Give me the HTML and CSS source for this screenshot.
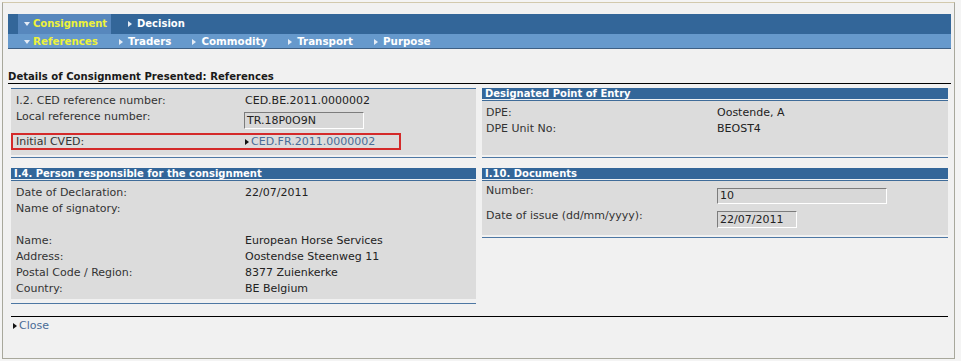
FILE: index.html
```html
<!DOCTYPE html>
<html lang="en">
<head>
    <meta charset="UTF-8">
    <title>CED • Details of Consignment Presented</title>
    <link rel="stylesheet" href="styles.css">
</head>
<body>
    <div class="window">
        <!-- Tabs -->
        <div class="tabs">
            <ul class="tabs-main">
                <li class="tab is-open"><span class="arrow-down"></span>Consignment</li>
                <li class="tab"><span class="arrow-right"></span>Decision</li>
            </ul>
            <ul class="tabs-sub">
                <li class="tab is-open"><span class="arrow-down"></span>References</li>
                <li class="tab"><span class="arrow-right"></span>Traders</li>
                <li class="tab"><span class="arrow-right"></span>Commodity</li>
                <li class="tab"><span class="arrow-right"></span>Transport</li>
                <li class="tab"><span class="arrow-right"></span>Purpose</li>
            </ul>
        </div>

        <h1 class="page-title">Details of Consignment Presented: References</h1>

        <div class="columns">
            <!-- Left column -->
            <div class="column left">
                <div class="panel no-head">
                    <div class="panel-body refs">
                        <div class="field">
                            <span class="label">I.2. CED reference number:</span>
                            <span class="value">CED.BE.2011.0000002</span>
                        </div>
                        <div class="field">
                            <span class="label">Local reference number:</span>
                            <span class="value"><span class="input local">TR.18P0O9N</span></span>
                        </div>
                        <div class="field highlight">
                            <span class="label">Initial CVED:</span>
                            <span class="value"><a class="link"><span class="arrow-right dark"></span>CED.FR.2011.0000002</a></span>
                        </div>
                    </div>
                </div>

                <div class="panel">
                    <div class="panel-head">I.4. Person responsible for the consignment</div>
                    <div class="panel-body person">
                        <div class="field">
                            <span class="label">Date of Declaration:</span>
                            <span class="value">22/07/2011</span>
                        </div>
                        <div class="field">
                            <span class="label">Name of signatory:</span>
                            <span class="value"></span>
                        </div>
                        <div class="field empty"></div>
                        <div class="field">
                            <span class="label">Name:</span>
                            <span class="value">European Horse Services</span>
                        </div>
                        <div class="field">
                            <span class="label">Address:</span>
                            <span class="value">Oostendse Steenweg 11</span>
                        </div>
                        <div class="field">
                            <span class="label">Postal Code / Region:</span>
                            <span class="value">8377 Zuienkerke</span>
                        </div>
                        <div class="field">
                            <span class="label">Country:</span>
                            <span class="value">BE Belgium</span>
                        </div>
                    </div>
                </div>
            </div>

            <!-- Right column -->
            <div class="column right">
                <div class="panel">
                    <div class="panel-head">Designated Point of Entry</div>
                    <div class="panel-body dpe">
                        <div class="field">
                            <span class="label">DPE:</span>
                            <span class="value">Oostende, A</span>
                        </div>
                        <div class="field">
                            <span class="label">DPE Unit No:</span>
                            <span class="value">BEOST4</span>
                        </div>
                    </div>
                </div>

                <div class="panel">
                    <div class="panel-head">I.10. Documents</div>
                    <div class="panel-body docs">
                        <div class="field">
                            <span class="label">Number:</span>
                            <span class="value"><span class="input number">10</span></span>
                        </div>
                        <div class="field second">
                            <span class="label">Date of issue (dd/mm/yyyy):</span>
                            <span class="value"><span class="input date">22/07/2011</span></span>
                        </div>
                    </div>
                </div>
            </div>
        </div>

        <div class="footer">
            <a class="link"><span class="arrow-right dark"></span>Close</a>
        </div>
    </div>
</body>
</html>
```

FILE: styles.css
```css
* {
    margin: 0;
    padding: 0;
    box-sizing: border-box;
}

body {
    font-family: "DejaVu Sans", Verdana, sans-serif;
    font-size: 11px;
    color: #333;
    background: #f4f4f4;
}

.window {
    margin: 2px;
    width: 953px;
    height: 357px;
    padding: 11px 3px 0 5px;
    background: #f1f1f1;
    border: 1px solid #a8a89c;
    border-top-color: #d2c9ad;
}

/* Tabs */
.tabs ul {
    list-style: none;
    display: flex;
    font-size: 10px;
    font-weight: bold;
    color: #fff;
}

.tabs-main {
    height: 20px;
    line-height: 20px;
    background: #336699;
    padding-left: 10px;
}

.tabs-main .tab {
    padding-left: 6px;
}

.tabs-main .tab.is-open {
    width: 93px;
    background: #5787bd;
}

.tabs-main .tab + .tab {
    margin-left: 11px;
}

.tabs-sub {
    height: 15px;
    line-height: 14px;
    background: #6699cc;
    border-bottom: 1px solid #3d5f84;
    padding-left: 16px;
    font-size: 10.3px !important;
}

.tabs-sub .tab {
    margin-right: 21px;
}

.tab.is-open {
    color: #eef23a;
}

.arrow-down {
    display: inline-block;
    width: 0;
    height: 0;
    border-left: 3.5px solid transparent;
    border-right: 3.5px solid transparent;
    border-top: 4px solid #e4ecf6;
    vertical-align: 1px;
    margin-right: 3px;
}

.arrow-right {
    display: inline-block;
    width: 0;
    height: 0;
    border-top: 3.5px solid transparent;
    border-bottom: 3.5px solid transparent;
    border-left: 4px solid #e4ecf6;
    vertical-align: 0;
    margin-right: 5px;
}

.arrow-right.dark {
    border-left-color: #111;
    margin-right: 2px;
}

.page-title {
    margin-top: 22px;
    font-size: 10.1px;
    line-height: 12px;
    font-weight: bold;
    color: #1a1a1a;
    border-bottom: 1px solid #000;
}

/* Panels */
.columns {
    display: grid;
    grid-template-columns: 465px 1fr;
    column-gap: 6px;
    align-items: start;
    margin: 4px 3px 0;
}

.panel {
    border-bottom: 1px solid #4d77a3;
}

.panel + .panel {
    margin-top: 10px;
}

.panel-head {
    height: 12px;
    line-height: 11px;
    padding-left: 3px;
    background: #336699;
    border-bottom: 1px solid #eef1f4;
    color: #fff;
    font-size: 10px;
    font-weight: bold;
}

.panel-body {
    background: #dcdcdc;
    border-top: 1px solid #3f6c99;
    margin-bottom: 2px;
    padding-left: 5px;
    line-height: 16px;
}

.field {
    display: grid;
    grid-template-columns: 229px 1fr;
}

.field.empty {
    height: 16px;
}

.right .panel-body {
    padding-left: 4px;
}

.right .field {
    grid-template-columns: 231px 1fr;
}

.value {
    color: #222;
}

.refs {
    padding-top: 4px;
    padding-bottom: 5px;
}

.refs .input {
    margin-top: 3px;
    margin-left: -1px;
}

.field.highlight {
    margin: 4px 0 0 -5px;
    width: 390px;
    padding-left: 3px;
    line-height: 13px;
    border: 2px solid #d42a2a;
}

.person {
    padding-top: 4px;
    padding-bottom: 2px;
    margin-bottom: 4px;
}

.dpe {
    padding-top: 4px;
    padding-bottom: 18px;
}

.docs {
    padding-top: 2px;
    padding-bottom: 7px;
}

.docs .input {
    margin-top: 5px;
}

.docs .field.second {
    margin-top: 4px;
}

.docs .field.second .input {
    margin-top: 3px;
    height: 17px;
    line-height: 15px;
}

.input {
    display: block;
    height: 16px;
    line-height: 14px;
    padding-left: 2px;
    background: #d8d8d8;
    border: 1px solid;
    border-color: #7c7c7c #ffffff #ffffff #7c7c7c;
    color: #222;
}

.input.local {
    width: 120px;
    height: 17px;
    line-height: 15px;
}

.input.number {
    width: 170px;
}

.input.date {
    width: 80px;
}

.link {
    color: #4a6c96;
    text-decoration: none;
}

.footer {
    margin: 12px 3px 0;
    border-top: 1px solid #000;
    padding: 2px 0 0 2px;
    line-height: 14px;
}
```
